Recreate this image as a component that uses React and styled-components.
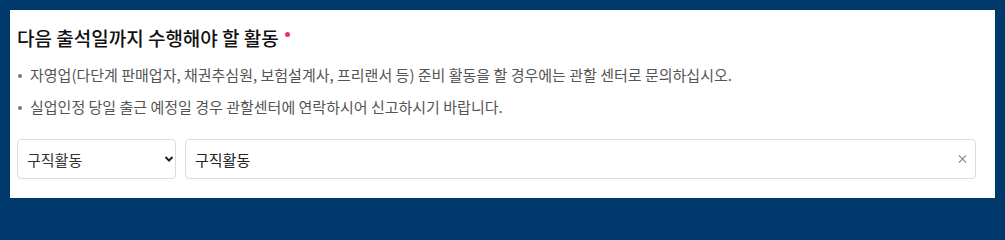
import React, { useState } from 'react';
import styled, { createGlobalStyle } from 'styled-components';

const GlobalStyle = createGlobalStyle`
  html, body {
    margin: 0;
    padding: 0;
    height: 208px;
    overflow: hidden;
    background: #00386b;
  }
  body {
    font-family: "Noto Sans CJK KR", "Noto Sans", sans-serif;
  }
`;

const Frame = styled.div`
  padding: 10px;
  height: 208px;
  box-sizing: border-box;
`;

const Panel = styled.section`
  background: #fff;
  height: 100%;
  box-sizing: border-box;
  padding: 15px 19px 0 7px;
`;

const Title = styled.h3`
  margin: 0;
  font-size: 19px;
  font-weight: 500;
  line-height: 26px;
  color: #111;
  display: flex;
  align-items: flex-start;
  gap: 6px;
`;

const Required = styled.span`
  width: 5px;
  height: 5px;
  margin-top: 7px;
  border-radius: 50%;
  background: #e8336d;
`;

const Notes = styled.ul`
  list-style: none;
  margin: 14px 0 0;
  padding: 0;
`;

const Note = styled.li`
  position: relative;
  padding-left: 13px;
  font-size: 15px;
  line-height: 20px;
  color: #555;
  &:not(:last-child) {
    margin-bottom: 12px;
  }
  &::before {
    content: '';
    position: absolute;
    left: 1px;
    top: 9px;
    width: 4px;
    height: 4px;
    border-radius: 50%;
    background: #777;
  }
`;

const FieldRow = styled.div`
  display: grid;
  grid-template-columns: 159px 1fr;
  gap: 9px;
  margin-top: 22px;
`;

const SelectWrap = styled.div`
  position: relative;
`;

const Select = styled.select`
  appearance: none;
  width: 100%;
  height: 40px;
  box-sizing: border-box;
  border: 1px solid #dcdcdc;
  border-radius: 4px;
  background: #fff;
  padding: 0 20px 0 9px;
  font: inherit;
  font-size: 15px;
  color: #333;
  outline: none;
`;

const Chevron = styled.svg`
  position: absolute;
  right: 2px;
  top: 16px;
  pointer-events: none;
`;

const InputWrap = styled.div`
  position: relative;
`;

const Input = styled.input`
  width: 100%;
  height: 40px;
  box-sizing: border-box;
  border: 1px solid #dcdcdc;
  border-radius: 4px;
  padding: 0 36px 0 9px;
  font: inherit;
  font-size: 15px;
  color: #222;
  outline: none;
`;

const Clear = styled.button`
  position: absolute;
  right: 5px;
  top: 50%;
  transform: translateY(-50%);
  border: 0;
  background: none;
  padding: 4px;
  display: flex;
  cursor: pointer;
`;

export default function App() {
  const [activity, setActivity] = useState('구직활동');
  const [detail, setDetail] = useState('구직활동');

  return (
    <>
      <GlobalStyle />
      <Frame>
        <Panel>
          <Title>
            다음 출석일까지 수행해야 할 활동
            <Required />
          </Title>
          <Notes>
            <Note>자영업(다단계 판매업자, 채권추심원, 보험설계사, 프리랜서 등) 준비 활동을 할 경우에는 관할 센터로 문의하십시오.</Note>
            <Note>실업인정 당일 출근 예정일 경우 관할센터에 연락하시어 신고하시기 바랍니다.</Note>
          </Notes>
          <FieldRow>
            <SelectWrap>
              <Select value={activity} onChange={e => setActivity(e.target.value)}>
                <option>구직활동</option>
                <option>직업훈련</option>
                <option>기타</option>
              </Select>
              <Chevron width="10" height="8" viewBox="0 0 10 8">
                <path d="M1.5 2 L5 5.5 L8.5 2" fill="none" stroke="#222" strokeWidth="2" />
              </Chevron>
            </SelectWrap>
            <InputWrap>
              <Input value={detail} onChange={e => setDetail(e.target.value)} />
              <Clear type="button" onClick={() => setDetail('')} aria-label="지우기">
                <svg width="9" height="9" viewBox="0 0 10 10">
                  <path d="M1 1 L9 9 M9 1 L1 9" stroke="#888" strokeWidth="1.4" />
                </svg>
              </Clear>
            </InputWrap>
          </FieldRow>
        </Panel>
      </Frame>
    </>
  );
}
